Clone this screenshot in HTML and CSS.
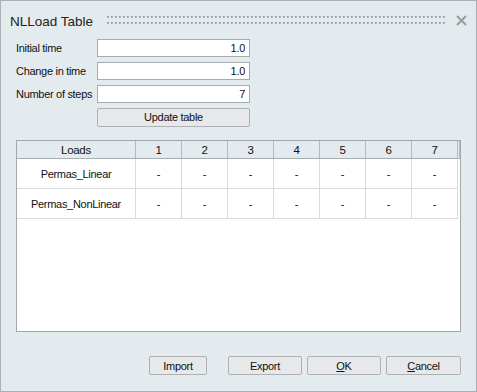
FILE: index.html
```html
<!DOCTYPE html>
<html lang="en">
<head>
    <meta charset="UTF-8">
    <title>NLLoad Table</title>
    <link rel="stylesheet" href="styles.css">
</head>
<body>
    <div class="window">
        <div class="titlebar">
            <span class="title">NLLoad Table</span>
            <svg class="grip" height="8">
                <defs>
                    <pattern id="dots" width="4" height="6" patternUnits="userSpaceOnUse">
                        <rect x="0" y="0" width="1.8" height="1.8" fill="#969a9e"/>
                    </pattern>
                </defs>
                <rect width="100%" height="8" fill="url(#dots)"/>
            </svg>
            <svg class="close" width="11" height="11" viewBox="0 0 11 11">
                <path d="M1 1 L10 10 M10 1 L1 10" stroke="#9a9a9a" stroke-width="1.9" fill="none"/>
            </svg>
        </div>

        <div class="form">
            <label>Initial time</label>
            <input class="field" type="text" value="1.0" readonly>
            <label>Change in time</label>
            <input class="field" type="text" value="1.0" readonly>
            <label>Number of steps</label>
            <input class="field" type="text" value="7" readonly>
            <span></span>
            <button class="btn update">Update table</button>
        </div>

        <div class="grid">
            <div class="row head">
                <div class="cell name">Loads</div>
                <div class="cell">1</div>
                <div class="cell">2</div>
                <div class="cell">3</div>
                <div class="cell">4</div>
                <div class="cell">5</div>
                <div class="cell">6</div>
                <div class="cell">7</div>
                <div class="cell filler"></div>
            </div>
            <div class="row">
                <div class="cell name">Permas_Linear</div>
                <div class="cell">-</div>
                <div class="cell">-</div>
                <div class="cell">-</div>
                <div class="cell">-</div>
                <div class="cell">-</div>
                <div class="cell">-</div>
                <div class="cell">-</div>
            </div>
            <div class="row">
                <div class="cell name">Permas_NonLinear</div>
                <div class="cell">-</div>
                <div class="cell">-</div>
                <div class="cell">-</div>
                <div class="cell">-</div>
                <div class="cell">-</div>
                <div class="cell">-</div>
                <div class="cell">-</div>
            </div>
        </div>

        <div class="actions">
            <button class="btn import">Import</button>
            <button class="btn">Export</button>
            <button class="btn"><u>O</u>K</button>
            <button class="btn cancel"><u>C</u>ancel</button>
        </div>
    </div>
</body>
</html>
```

FILE: styles.css
```css
body {
    margin: 0;
    font-family: "Liberation Sans", Arial, sans-serif;
    font-size: 11px;
    letter-spacing: -0.3px;
    color: #111;
}

.window {
    box-sizing: border-box;
    width: 477px;
    height: 392px;
    border: 1px solid #aab0b4;
    background-color: #e4ebee;
}

.titlebar {
    display: flex;
    align-items: center;
    height: 38px;
    padding: 0 9px 0 9px;
}

.title {
    font-size: 13.5px;
    letter-spacing: 0;
    color: #222;
    margin-top: 2px;
}

.grip {
    flex: 1;
    min-width: 0;
    display: block;
    margin: 0 9px 0 14px;
}

.close {
    display: block;
}

.form {
    display: grid;
    grid-template-columns: 81px 153px;
    grid-auto-rows: 18px;
    row-gap: 5px;
    padding-left: 15px;
    align-items: center;
}

.form label {
    white-space: nowrap;
}

.field {
    box-sizing: border-box;
    height: 18px;
    width: 153px;
    margin: 0;
    border: 1px solid #a7abae;
    background: #fff;
    font: inherit;
    letter-spacing: inherit;
    color: #111;
    text-align: right;
    padding: 0 4px;
    outline: none;
}

.btn {
    box-sizing: border-box;
    height: 19px;
    margin: 0;
    padding: 0;
    border: 1px solid #adb1b4;
    border-radius: 2px;
    background-color: #e6e8ea;
    font: inherit;
    letter-spacing: inherit;
    color: #111;
}

.update {
    width: 153px;
}

.grid {
    box-sizing: border-box;
    width: 445px;
    height: 192px;
    margin: 14px 0 0 15px;
    border: 1px solid #a3a8ac;
    background-color: #fff;
}

.row {
    display: flex;
    height: 30px;
}

.cell {
    box-sizing: border-box;
    width: 46px;
    border-right: 1px solid #dadada;
    border-bottom: 1px solid #dadada;
    display: flex;
    align-items: center;
    justify-content: center;
}

.cell.name {
    width: 119px;
}

.head {
    height: 18px;
    background-color: #e4ebee;
}

.head .cell {
    border-right-color: #b4babe;
    border-bottom-color: #a8adb1;
    font-size: 11.5px;
}

.head .filler {
    width: 2px;
}

.actions {
    display: flex;
    justify-content: flex-end;
    gap: 5px;
    margin-top: 24px;
    padding-right: 15px;
}

.actions .btn {
    width: 74px;
}

.actions .import {
    width: 58px;
    margin-right: 16px;
}

.actions .cancel {
    width: 75px;
}
```
